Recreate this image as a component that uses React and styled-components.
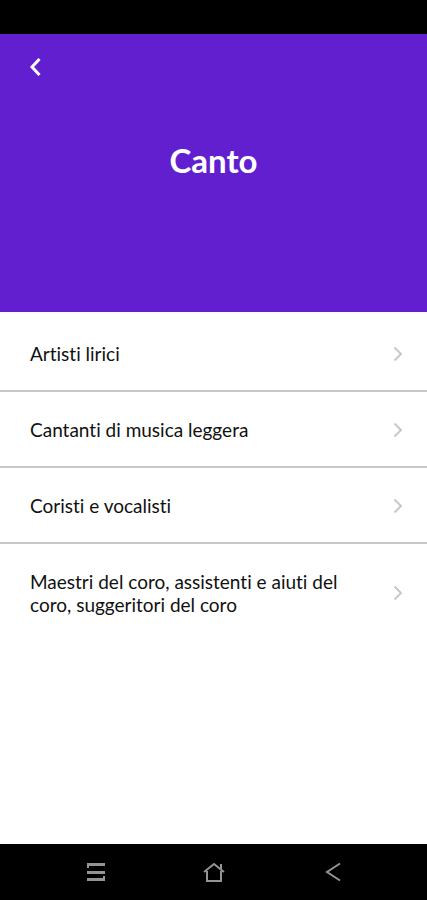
import styled, { createGlobalStyle } from "styled-components";

const categories = [
  "Artisti lirici",
  "Cantanti di musica leggera",
  "Coristi e vocalisti",
  "Maestri del coro, assistenti e aiuti del coro, suggeritori del coro",
];

function App() {
  return (
    <Screen>
      <GlobalStyle />
      <StatusBar />
      <Header>
        <BackButton type="button" aria-label="Indietro">
          <svg width="12" height="20" viewBox="0 0 12 20">
            <path d="M10.5 2L3 10L10.5 18" fill="none" stroke="#fff" strokeWidth="3" />
          </svg>
        </BackButton>
        <Title>Canto</Title>
      </Header>
      <List>
        {categories.map((name) => (
          <Item key={name}>
            <ItemLink href="#">
              <Label>{name}</Label>
              <svg width="10" height="16" viewBox="0 0 10 16">
                <path d="M1.5 1.5L8 8L1.5 14.5" fill="none" stroke="#c8c8c8" strokeWidth="2" />
              </svg>
            </ItemLink>
          </Item>
        ))}
      </List>
      <NavBar>
        <NavButton type="button" aria-label="Menu">
          <svg width="20" height="20" viewBox="0 0 20 20">
            <path d="M2 2.5H20M2 10.5H20M2 17.5H20" strokeWidth="3" />
            <path d="M3 2V6M19 18V14" strokeWidth="2" />
          </svg>
        </NavButton>
        <NavButton type="button" aria-label="Home">
          <svg width="22" height="20" viewBox="0 0 22 20">
            <path d="M1 10L11 2L21 10M4 9V19H18V9M18 7V2" strokeWidth="2" />
          </svg>
        </NavButton>
        <NavButton type="button" aria-label="Back">
          <svg width="16" height="20" viewBox="0 0 16 20">
            <path d="M15 1.5L2 10L15 18.5" strokeWidth="2" />
          </svg>
        </NavButton>
      </NavBar>
    </Screen>
  );
}

const GlobalStyle = createGlobalStyle`
  * {
    box-sizing: border-box;
  }

  body {
    margin: 0;
    background-color: #fff;
    font-family: Lato, "Liberation Sans", sans-serif;
    font-variant-ligatures: none;
  }
`;

const Screen = styled.div`
  display: flex;
  flex-direction: column;
  min-height: 100vh;
`;

const StatusBar = styled.div`
  background-color: #000;
  height: 34px;
`;

const Header = styled.header`
  background-color: #621fcf;
  color: #fff;
  padding: 12px 16px 132px;
`;

const BackButton = styled.button`
  align-items: center;
  background: none;
  border: none;
  display: flex;
  height: 42px;
  justify-content: center;
  padding: 0;
  width: 38px;
`;

const Title = styled.h1`
  font-size: 33px;
  font-weight: 700;
  line-height: 40px;
  margin: 52px 0 0;
  text-align: center;
`;

const List = styled.ul`
  flex: 1;
  list-style: none;
  margin: 0;
  padding: 4px 0 0;
`;

const Item = styled.li`
  border-bottom: 2px solid #c8c8c8;

  &:last-child {
    border-bottom: none;
  }
`;

const ItemLink = styled.a`
  align-items: center;
  color: #111;
  display: flex;
  justify-content: space-between;
  padding: 26px 24px 25px 30px;
  text-decoration: none;
`;

const Label = styled.span`
  font-size: 19px;
  line-height: 23px;
  max-width: 320px;
`;

const NavBar = styled.nav`
  align-items: center;
  background-color: #000;
  display: flex;
  height: 56px;
  justify-content: center;
  gap: 79px;
`;

const NavButton = styled.button`
  align-items: center;
  background: none;
  border: none;
  display: flex;
  height: 40px;
  justify-content: center;
  padding: 0;
  width: 40px;

  path {
    fill: none;
    stroke: #949494;
  }
`;

export default App;
